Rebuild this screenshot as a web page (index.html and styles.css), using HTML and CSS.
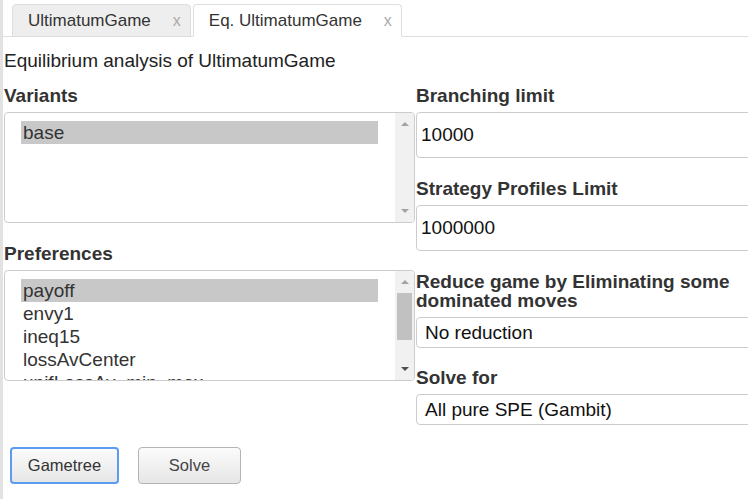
FILE: index.html
```html
<!DOCTYPE html>
<html>
<head>
<meta charset="utf-8">
<link rel="stylesheet" href="styles.css">
</head>
<body>
<div class="page">
  <div class="strip"></div>
  <div class="main">
    <div class="tabs">
      <div class="tab">UltimatumGame<span class="close">x</span></div>
      <div class="tab active">Eq. UltimatumGame<span class="close">x</span></div>
    </div>
    <div class="content">
      <div class="title">Equilibrium analysis of UltimatumGame</div>
      <div class="cols">
        <div class="col">
          <div class="label">Variants</div>
          <div class="listbox">
            <div class="options">
              <div class="opt sel">base</div>
            </div>
            <div class="sbar">
              <div class="arr"><span class="up"></span></div>
              <div class="track"></div>
              <div class="arr"><span class="down"></span></div>
            </div>
          </div>
          <div class="label">Preferences</div>
          <div class="listbox">
            <div class="options">
              <div class="opt sel">payoff</div>
              <div class="opt">envy1</div>
              <div class="opt">ineq15</div>
              <div class="opt">lossAvCenter</div>
              <div class="opt">unifLossAv_min_max</div>
            </div>
            <div class="sbar">
              <div class="arr"><span class="up"></span></div>
              <div class="track"><div class="thumb"></div></div>
              <div class="arr"><span class="down active"></span></div>
            </div>
          </div>
        </div>
        <div class="col">
          <div class="label">Branching limit</div>
          <div class="field">10000</div>
          <div class="label">Strategy Profiles Limit</div>
          <div class="field">1000000</div>
          <div class="label">Reduce game by Eliminating some dominated moves</div>
          <div class="select">No reduction</div>
          <div class="label">Solve for</div>
          <div class="select">All pure SPE (Gambit)</div>
        </div>
      </div>
      <div class="buttons">
        <button class="btn focus gametree">Gametree</button>
        <button class="btn solve">Solve</button>
      </div>
    </div>
  </div>
</div>
</body>
</html>
```

FILE: styles.css
```css
html, body {
  margin: 0;
  padding: 0;
  overflow: hidden;
  background: #fff;
}
body {
  font-family: "Liberation Sans", Arial, sans-serif;
  color: #333;
}
.page {
  display: flex;
  min-height: 100vh;
}
.strip {
  width: 3px;
  flex: none;
  background: #e2e2e2;
}
.main {
  flex: 1;
  min-width: 0;
}
.tabs {
  display: flex;
  gap: 2px;
  padding: 4px 0 0 9px;
  height: 32px;
  border-bottom: 1px solid #ddd;
}
.tab {
  height: 31px;
  display: flex;
  align-items: center;
  padding: 0 9px 0 15px;
  border: 1px solid #ddd;
  border-radius: 4px 4px 0 0;
  background: #eee;
  font-size: 17px;
  color: #333;
  margin-bottom: -1px;
  flex: none;
}
.tab.active {
  background: #fff;
  border-bottom-color: #fff;
}
.close {
  margin-left: 22px;
  font-size: 16px;
  color: #aaa;
}
.content {
  padding-left: 1px;
}
.title {
  margin-top: 13px;
  font-size: 19px;
  line-height: 22px;
  color: #222;
}
.cols {
  display: grid;
  grid-template-columns: 411px 411px;
  column-gap: 1px;
  margin-top: 14px;
  align-items: start;
}
.col > :last-child {
  margin-bottom: 0;
}
.label {
  font-weight: bold;
  font-size: 19px;
  line-height: 19px;
  color: #333;
  margin-bottom: 7px;
}
.listbox {
  box-sizing: border-box;
  height: 111px;
  border: 1px solid #ccc;
  border-radius: 4px;
  display: flex;
  margin-bottom: 21px;
  overflow: hidden;
}
.options {
  flex: 1;
  padding: 8px 17px 0 16px;
  overflow: hidden;
}
.opt {
  font-size: 19px;
  line-height: 23px;
  height: 23px;
  padding-left: 2px;
  color: #333;
  white-space: nowrap;
}
.opt.sel {
  background: #c8c8c8;
}
.sbar {
  width: 19px;
  flex: none;
  background: #f1f1f1;
  display: flex;
  flex-direction: column;
}
.arr {
  height: 22px;
  display: flex;
  align-items: center;
  justify-content: center;
  flex: none;
}
.up, .down {
  width: 0;
  height: 0;
  border-left: 4px solid transparent;
  border-right: 4px solid transparent;
}
.up {
  border-bottom: 4px solid #a3a3a3;
}
.down {
  border-top: 4px solid #a3a3a3;
}
.down.active {
  border-top-color: #505050;
}
.track {
  flex: 1;
}
.thumb {
  width: 15px;
  height: 47px;
  margin-left: 2px;
  background: #c1c1c1;
}
.field, .select {
  box-sizing: border-box;
  border: 1px solid #ccc;
  border-radius: 4px;
  display: flex;
  align-items: center;
  font-size: 19px;
  color: #111;
  white-space: nowrap;
}
.field {
  height: 46px;
  padding: 0 4px;
  margin-bottom: 21px;
}
.select {
  height: 31px;
  padding: 0 8px;
  margin-bottom: 20px;
}
.buttons {
  display: flex;
  gap: 19px;
  margin-top: 22px;
  margin-left: 6px;
}
.btn {
  box-sizing: border-box;
  height: 37px;
  border: 1px solid #b4b4b4;
  border-radius: 4px;
  background: linear-gradient(#fbfbfb, #e6e6e6);
  font-family: "Liberation Sans", Arial, sans-serif;
  font-size: 16.5px;
  color: #333;
  padding: 0;
}
.btn.focus {
  border: 2px solid #5b9cf0;
}
.gametree {
  width: 109px;
}
.solve {
  width: 103px;
  color: #444;
}
```
